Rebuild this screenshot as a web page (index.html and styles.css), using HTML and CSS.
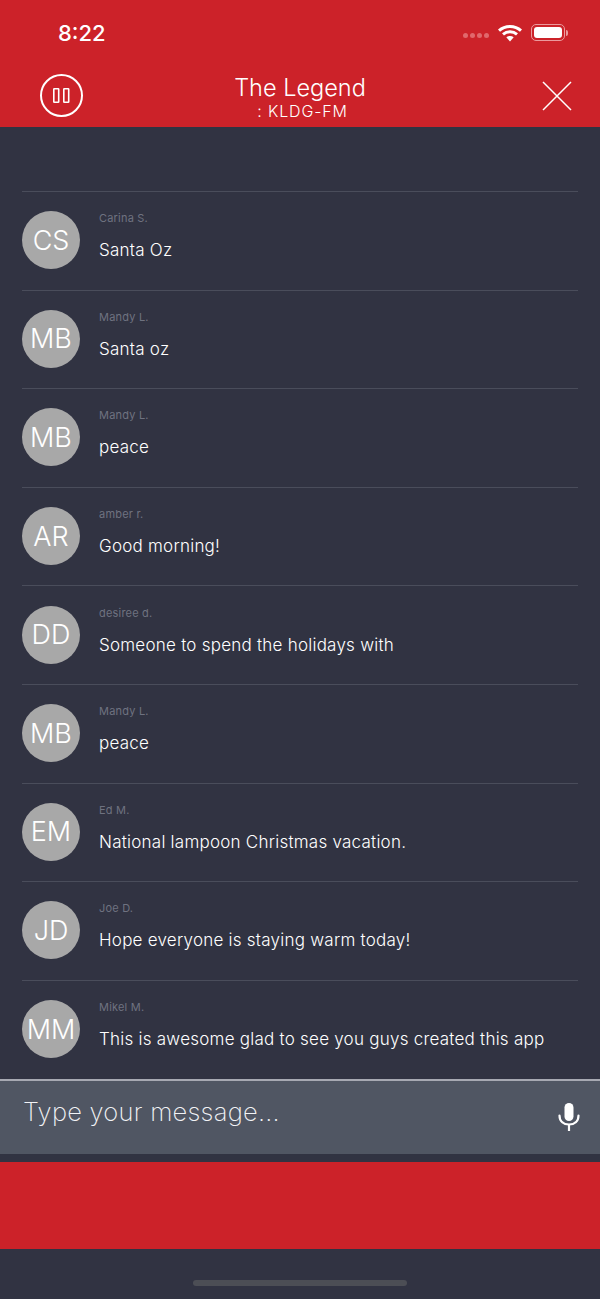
FILE: index.html
```html
<!DOCTYPE html>
<html lang="en">
<head>
  <meta charset="UTF-8">
  <meta name="viewport" content="width=device-width, initial-scale=1.0">
  <title>The Legend</title>
  <link rel="stylesheet" href="styles.css">
</head>
<body>
  <header class="top">
    <div class="status">
      <div class="time">8:22</div>
      <div class="status-icons">
        <div class="dots"><span></span><span></span><span></span><span></span></div>
        <svg class="wifi" width="24" height="18" viewBox="0 0 24 18">
          <path d="M1 6.6C7 1 17 1 23 6.6" fill="none" stroke="#fff" stroke-width="3"/>
          <path d="M5 10.4C9 7 15 7 19 10.4" fill="none" stroke="#fff" stroke-width="3"/>
          <path d="M12 17.5l-3.7-4.2c2.2-1.6 5.2-1.6 7.4 0z" fill="#fff"/>
        </svg>
        <div class="battery"><div class="battery-fill"></div></div>
        <div class="battery-cap"></div>
      </div>
    </div>
    <div class="nav">
      <button class="pause" aria-label="Pause">
        <svg width="44" height="44" viewBox="0 0 44 44">
          <circle cx="21.5" cy="21.5" r="20.5" fill="none" stroke="#fff" stroke-width="2"/>
          <rect x="13.8" y="14.8" width="4.9" height="13.4" rx="0.5" fill="none" stroke="#fff" stroke-width="1.6"/>
          <rect x="23.8" y="14.8" width="4.9" height="13.4" rx="0.5" fill="none" stroke="#fff" stroke-width="1.6"/>
        </svg>
      </button>
      <div class="nav-title">
        <div class="station">The Legend</div>
        <div class="callsign">: KLDG-FM</div>
      </div>
      <button class="close" aria-label="Close">
        <svg width="30" height="30" viewBox="0 0 30 30">
          <path d="M1 1L29 29M29 1L1 29" stroke="#fff" stroke-width="1.5"/>
        </svg>
      </button>
    </div>
  </header>

  <div class="chat">
    <div class="msg">
      <div class="avatar">CS</div>
      <div class="msg-body"><div class="name">Carina S.</div><div class="text">Santa Oz</div></div>
    </div>
    <div class="msg">
      <div class="avatar">MB</div>
      <div class="msg-body"><div class="name">Mandy L.</div><div class="text">Santa oz</div></div>
    </div>
    <div class="msg">
      <div class="avatar">MB</div>
      <div class="msg-body"><div class="name">Mandy L.</div><div class="text">peace</div></div>
    </div>
    <div class="msg">
      <div class="avatar">AR</div>
      <div class="msg-body"><div class="name">amber r.</div><div class="text">Good morning!</div></div>
    </div>
    <div class="msg">
      <div class="avatar">DD</div>
      <div class="msg-body"><div class="name">desiree d.</div><div class="text">Someone to spend the holidays with</div></div>
    </div>
    <div class="msg">
      <div class="avatar">MB</div>
      <div class="msg-body"><div class="name">Mandy L.</div><div class="text">peace</div></div>
    </div>
    <div class="msg">
      <div class="avatar">EM</div>
      <div class="msg-body"><div class="name">Ed M.</div><div class="text">National lampoon Christmas vacation.</div></div>
    </div>
    <div class="msg">
      <div class="avatar">JD</div>
      <div class="msg-body"><div class="name">Joe D.</div><div class="text">Hope everyone is staying warm today!</div></div>
    </div>
    <div class="msg">
      <div class="avatar">MM</div>
      <div class="msg-body"><div class="name">Mikel M.</div><div class="text">This is awesome glad to see you guys created this app</div></div>
    </div>
  </div>

  <div class="composer">
    <div class="placeholder">Type your message...</div>
    <svg class="mic" width="22" height="30" viewBox="0 0 22 30">
      <rect x="6.5" y="1" width="9" height="18" rx="4.5" fill="#fff"/>
      <path d="M1.5 13.5C1.5 19.5 5.5 22.5 11 22.5S20.5 19.5 20.5 13.5" fill="none" stroke="#fff" stroke-width="2.2" stroke-linecap="round"/>
      <path d="M11 22v7" stroke="#fff" stroke-width="2.2"/>
    </svg>
  </div>

  <div class="banner"></div>

  <div class="home-area"><div class="home-bar"></div></div>
</body>
</html>
```

FILE: styles.css
```css
body {
  margin: 0;
  height: 1299px;
  overflow: hidden;
  font-family: Inter, 'Noto Sans', sans-serif;
  background: #313342;
  color: #fff;
}
button {
  padding: 0;
  border: none;
  background: none;
  display: flex;
}
.top {
  height: 127px;
  background: #cc2229;
}
.status {
  height: 65px;
  display: flex;
  justify-content: space-between;
  align-items: center;
  padding: 0 32px 0 58px;
}
.time {
  font-size: 22px;
  font-weight: 500;
}
.status-icons {
  display: flex;
  align-items: center;
}
.dots {
  display: flex;
  gap: 2px;
  margin: 6px 9px 0 0;
}
.dots span {
  width: 5px;
  height: 5px;
  border-radius: 50%;
  background: #e0686c;
}
.wifi {
  margin-right: 9px;
}
.battery {
  width: 34px;
  height: 17px;
  box-sizing: border-box;
  padding: 2px;
  border: 1px solid #eb9a9d;
  border-radius: 5px;
}
.battery-fill {
  height: 100%;
  background: #fff;
  border-radius: 3px;
}
.battery-cap {
  width: 2px;
  height: 6px;
  margin-left: 1px;
  background: #eb9a9d;
  border-radius: 0 2px 2px 0;
}
.nav {
  height: 62px;
  display: grid;
  grid-template-columns: 1fr auto 1fr;
  align-items: center;
  padding: 0 28px 0 40px;
}
.close {
  justify-self: end;
}
.nav-title {
  text-align: center;
  padding: 1px 12px 0 0;
}
.station {
  font-size: 23.5px;
  font-weight: 300;
  line-height: 29px;
}
.callsign {
  font-size: 16px;
  font-weight: 300;
  line-height: 18px;
  letter-spacing: 0.85px;
  padding-left: 5px;
}
.chat {
  padding: 64px 22px 0;
  height: 888px;
}
.msg {
  height: 98.6px;
  box-sizing: border-box;
  border-top: 1px solid #4a4d5b;
  display: flex;
  align-items: center;
  gap: 19px;
}
.avatar {
  width: 58px;
  height: 58px;
  margin-top: -1px;
  border-radius: 50%;
  background: #a8a8a8;
  font-size: 27px;
  font-weight: 300;
  display: flex;
  align-items: center;
  justify-content: center;
  flex-shrink: 0;
}
.msg-body {
  padding-bottom: 9px;
}
.name {
  font-size: 11px;
  color: #6f7280;
  line-height: 14px;
  letter-spacing: 0.2px;
}
.text {
  font-size: 17px;
  font-weight: 300;
  line-height: 22px;
  margin-top: 14px;
  letter-spacing: 0.24px;
}
.composer {
  height: 75px;
  box-sizing: border-box;
  border-top: 2px solid #a7a9b2;
  background: #505663;
  display: flex;
  justify-content: space-between;
  align-items: center;
  padding: 0 20px 0 23px;
}
.placeholder {
  font-size: 25.5px;
  font-weight: 200;
  color: #f2f3f6;
  letter-spacing: 0.25px;
  padding-bottom: 12px;
}
.mic {
  margin-top: -2px;
}
.banner {
  height: 87px;
  margin-top: 8px;
  background: #cc2229;
}
.home-area {
  height: 50px;
  display: flex;
  justify-content: center;
  padding-top: 31px;
  box-sizing: border-box;
}
.home-bar {
  width: 214px;
  height: 6px;
  border-radius: 3px;
  background: #4c4e55;
}
```
